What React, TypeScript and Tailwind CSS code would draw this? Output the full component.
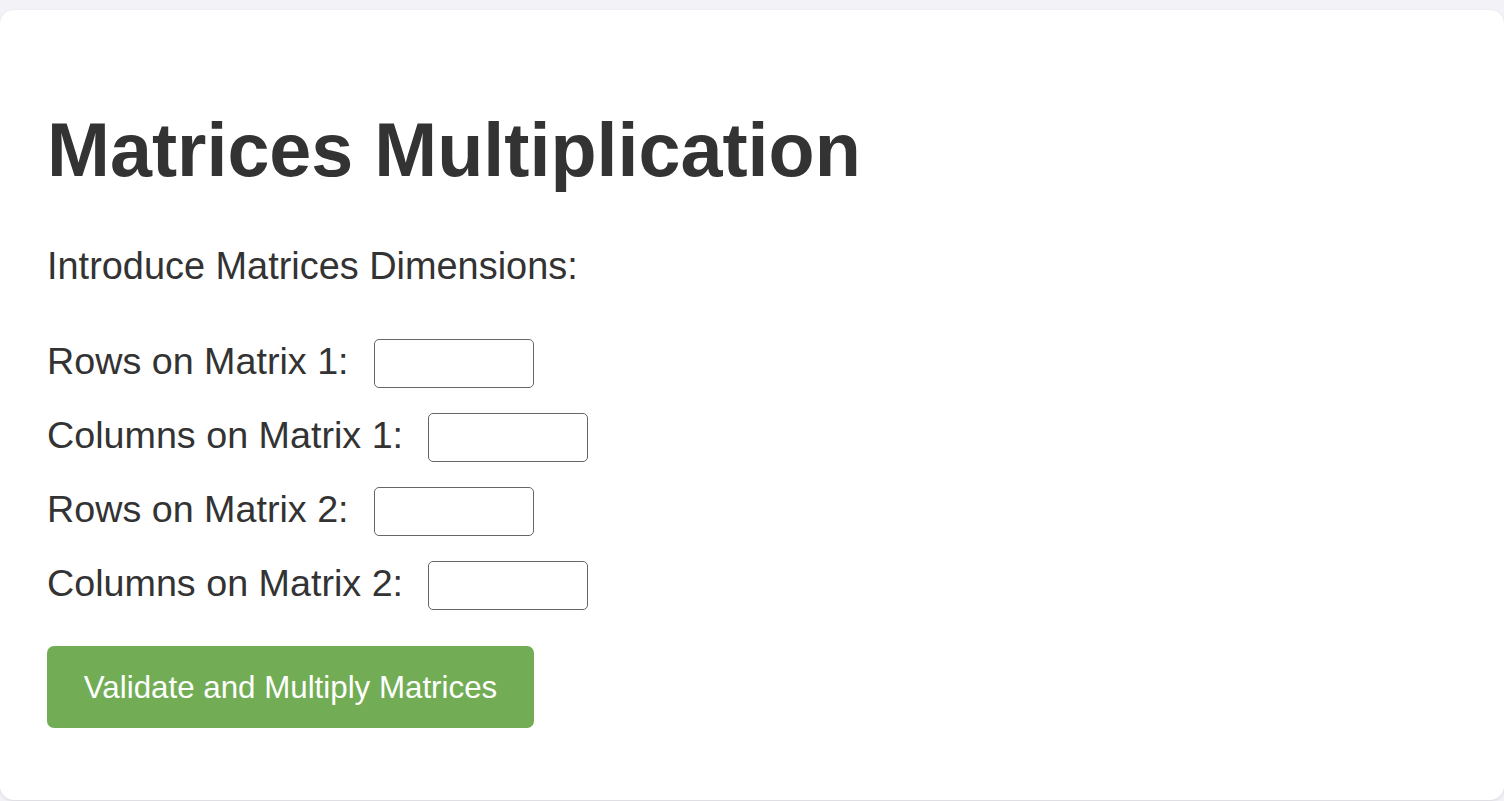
export default function App() {
  const fields = [
    "Rows on Matrix 1:",
    "Columns on Matrix 1:",
    "Rows on Matrix 2:",
    "Columns on Matrix 2:",
  ];

  return (
    <div className="min-h-screen bg-[#f2f2f7] pt-[10px] pb-px font-['Liberation_Sans',Arial,sans-serif] text-[#333333]">
      <div className="h-[790px] rounded-[14px] bg-white px-[47px] pt-[103px] shadow-[0_1px_3px_rgba(0,0,0,0.12)]">
        <h1 className="text-[75.5px] font-bold leading-none">Matrices Multiplication</h1>

        <p className="mt-[59px] text-[37.9px] leading-none">Introduce Matrices Dimensions:</p>

        <div className="mt-[54px] flex flex-col gap-[25px]">
          {fields.map((label) => (
            <div key={label} className="flex items-center gap-[25px]">
              <span className="text-[37.7px] leading-none -mt-[4px]">{label}</span>
              <input
                type="text"
                className="h-[49px] w-[160px] rounded-[5px] border border-[#666666] bg-white px-2 text-[30px] outline-none"
              />
            </div>
          ))}
        </div>

        <button className="mt-[36px] h-[82px] w-[487px] rounded-[7px] bg-[#72ad55] text-[31.3px] leading-none text-white">
          Validate and Multiply Matrices
        </button>
      </div>
    </div>
  );
}
